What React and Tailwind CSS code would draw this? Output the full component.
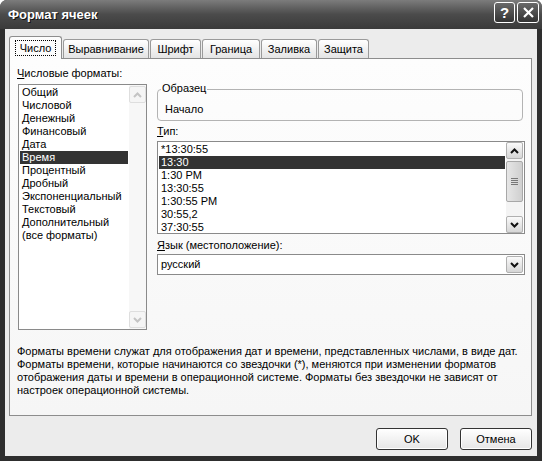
import React from "react"

const formats = [
  "Общий",
  "Числовой",
  "Денежный",
  "Финансовый",
  "Дата",
  "Время",
  "Процентный",
  "Дробный",
  "Экспоненциальный",
  "Текстовый",
  "Дополнительный",
  "(все форматы)",
]

const types = ["*13:30:55", "13:30", "1:30 PM", "13:30:55", "1:30:55 PM", "30:55,2", "37:30:55"]

const tabs = [
  { label: "Выравнивание", w: "w-[86px]" },
  { label: "Шрифт", w: "w-[51px]" },
  { label: "Граница", w: "w-[58px]" },
  { label: "Заливка", w: "w-[56px]" },
  { label: "Защита", w: "w-[51px]" },
]

function Chevron({ up, color }) {
  return (
    <svg width="9" height="6" viewBox="0 0 9 6">
      <polyline
        points={up ? "1,5 4.5,1.5 8,5" : "1,1 4.5,4.5 8,1"}
        fill="none"
        stroke={color}
        strokeWidth="2"
      />
    </svg>
  )
}

function ArrowBtn({ up, disabled }) {
  return (
    <div
      className={
        disabled
          ? "w-[17px] h-[17px] shrink-0 rounded-[2px] border border-[#dedede] bg-[#f5f5f5] flex items-center justify-center"
          : "w-[17px] h-[17px] shrink-0 rounded-[2px] border border-[#b0b0b0] bg-linear-to-b from-[#fafafa] to-[#d6d6d6] flex items-center justify-center"
      }
    >
      <Chevron up={up} color={disabled ? "#c4c4c4" : "#111"} />
    </div>
  )
}

export default function App() {
  return (
    <div className="w-[542px] h-[461px] bg-[#2e2e2e] rounded-t-[7px] flex flex-col overflow-hidden font-['Liberation_Sans',Arial,sans-serif] text-[11px] text-black">
      {/* title bar */}
      <div className="h-[29px] shrink-0 flex items-center pl-[8px] pr-[3px] bg-linear-to-b from-[#7c7c7c] via-[#4b4b4b] to-[#3a3a3a]">
        <span className="text-[13px] font-bold text-white [text-shadow:1px_1px_0_#111]">Формат ячеек</span>
        <div className="ml-auto flex gap-[2px] mb-[4px]">
          <div className="w-[21px] h-[21px] rounded-[3px] border border-white bg-linear-to-b from-[#6a6a6a] to-[#333] flex items-center justify-center text-white font-bold text-[15px] leading-none">
            ?
          </div>
          <div className="w-[22px] h-[21px] rounded-[3px] border border-white bg-linear-to-b from-[#6a6a6a] to-[#333] flex items-center justify-center">
            <svg width="13" height="13" viewBox="0 0 13 13">
              <path d="M2 2 L11 11 M11 2 L2 11" stroke="#fff" strokeWidth="2.2" />
            </svg>
          </div>
        </div>
      </div>

      {/* body */}
      <div className="flex-1 mx-[5px] mb-[5px] bg-[#ececec] flex flex-col">
        {/* tabs */}
        <div className="mt-[7px] ml-[4px] h-[22px] flex items-end relative z-10">
          <div className="w-[53px] h-[23px] -mb-[1px] rounded-t-[3px] border border-b-0 border-[#8d8d8d] bg-[#fcfcfc] flex items-start justify-center pt-[3px]">
            <span className="px-[4px] leading-[14px] border border-dotted border-black">Число</span>
          </div>
          {tabs.map((t) => (
            <div
              key={t.label}
              className={`${t.w} ml-[1px] h-[19px] rounded-t-[3px] border border-b-0 border-[#9a9a9a] bg-linear-to-b from-white to-[#e4e4e4] flex items-center justify-center`}
            >
              {t.label}
            </div>
          ))}
        </div>

        {/* panel */}
        <div className="ml-[4px] w-[523px] h-[358px] border border-[#8d8d8d] bg-linear-to-b from-[#fdfdfd] to-[#f6f6f6] flex flex-col pl-[7px] pt-[8px]">
          <div className="flex">
            {/* left column */}
            <div className="w-[130px] flex flex-col">
              <div className="leading-[13px]">
                <span className="underline">Ч</span>исловые форматы:
              </div>
              <div className="mt-[4px] ml-[1px] w-[129px] h-[246px] border border-[#8a8a8a] bg-white flex">
                <div className="flex-1 pt-[1px]">
                  {formats.map((f) => (
                    <div
                      key={f}
                      className={
                        f === "Время"
                          ? "h-[13px] leading-[13px] pl-[2px] mx-[1px] bg-[#333] text-white"
                          : "h-[13px] leading-[13px] pl-[3px]"
                      }
                    >
                      {f}
                    </div>
                  ))}
                </div>
                <div className="w-[17px] flex flex-col bg-[#f7f7f7]">
                  <div className="mt-[1px]">
                    <ArrowBtn up disabled />
                  </div>
                  <div className="flex-1" />
                  <div className="mb-[1px]">
                    <ArrowBtn disabled />
                  </div>
                </div>
              </div>
            </div>

            {/* right column */}
            <div className="ml-[10px] w-[368px] flex flex-col pt-[22px]">
              <div className="relative w-[366px] h-[32px] rounded-[4px] border border-[#b3b3b3]">
                <span className="absolute -top-[8px] left-[3px] px-[1px] bg-[#fcfcfc] leading-[13px]">Образец</span>
                <div className="pt-[13px] pl-[7px] leading-[13px]">Начало</div>
              </div>
              <div className="mt-[4px] leading-[13px]">
                <span className="underline">Т</span>ип:
              </div>
              <div className="mt-[3px] w-[368px] h-[93px] border border-[#8a8a8a] bg-white flex">
                <div className="flex-1 pt-[1px]">
                  {types.map((t, i) => (
                    <div
                      key={i}
                      className={
                        i === 1
                          ? "h-[13px] leading-[13px] pl-[2px] mx-[1px] bg-[#333] text-white"
                          : "h-[13px] leading-[13px] pl-[3px]"
                      }
                    >
                      {t}
                    </div>
                  ))}
                </div>
                <div className="w-[17px] mr-[1px] flex flex-col bg-[#f4f4f4]">
                  <ArrowBtn up />
                  <div className="mt-[2px] h-[41px] rounded-[2px] border border-[#a8a8a8] bg-linear-to-r from-[#e6e6e6] to-[#cfcfcf] flex flex-col items-center justify-center gap-[1px]">
                    <div className="w-[7px] h-[1px] bg-[#777]" />
                    <div className="w-[7px] h-[1px] bg-[#777]" />
                    <div className="w-[7px] h-[1px] bg-[#777]" />
                    <div className="w-[7px] h-[1px] bg-[#777]" />
                  </div>
                  <div className="flex-1" />
                  <ArrowBtn />
                </div>
              </div>
              <div className="mt-[5px] leading-[13px]">
                <span className="underline">Я</span>зык (местоположение):
              </div>
              <div className="mt-[2px] w-[368px] h-[21px] border border-[#8a8a8a] bg-white flex items-center">
                <span className="flex-1 pl-[3px]">русский</span>
                <div className="mr-[1px]">
                  <ArrowBtn />
                </div>
              </div>
            </div>
          </div>

          <p className="mt-[15px] leading-[13px]">
            Форматы времени служат для отображения дат и времени, представленных числами, в виде дат.
            <br />
            Форматы времени, которые начинаются со звездочки (*), меняются при изменении форматов
            <br />
            отображения даты и времени в операционной системе. Форматы без звездочки не зависят от
            <br />
            настроек операционной системы.
          </p>
        </div>

        {/* buttons */}
        <div className="mt-[12px] flex justify-end gap-[12px] pr-[5px]">
          <button className="w-[72px] h-[22px] rounded-[3px] border border-[#333] bg-linear-to-b from-white to-[#e6e6e6] shadow-[inset_0_0_0_1px_#fff]">
            OK
          </button>
          <button className="w-[72px] h-[22px] rounded-[3px] border border-[#333] bg-linear-to-b from-white to-[#e6e6e6] shadow-[inset_0_0_0_1px_#fff]">
            Отмена
          </button>
        </div>
      </div>
    </div>
  )
}
